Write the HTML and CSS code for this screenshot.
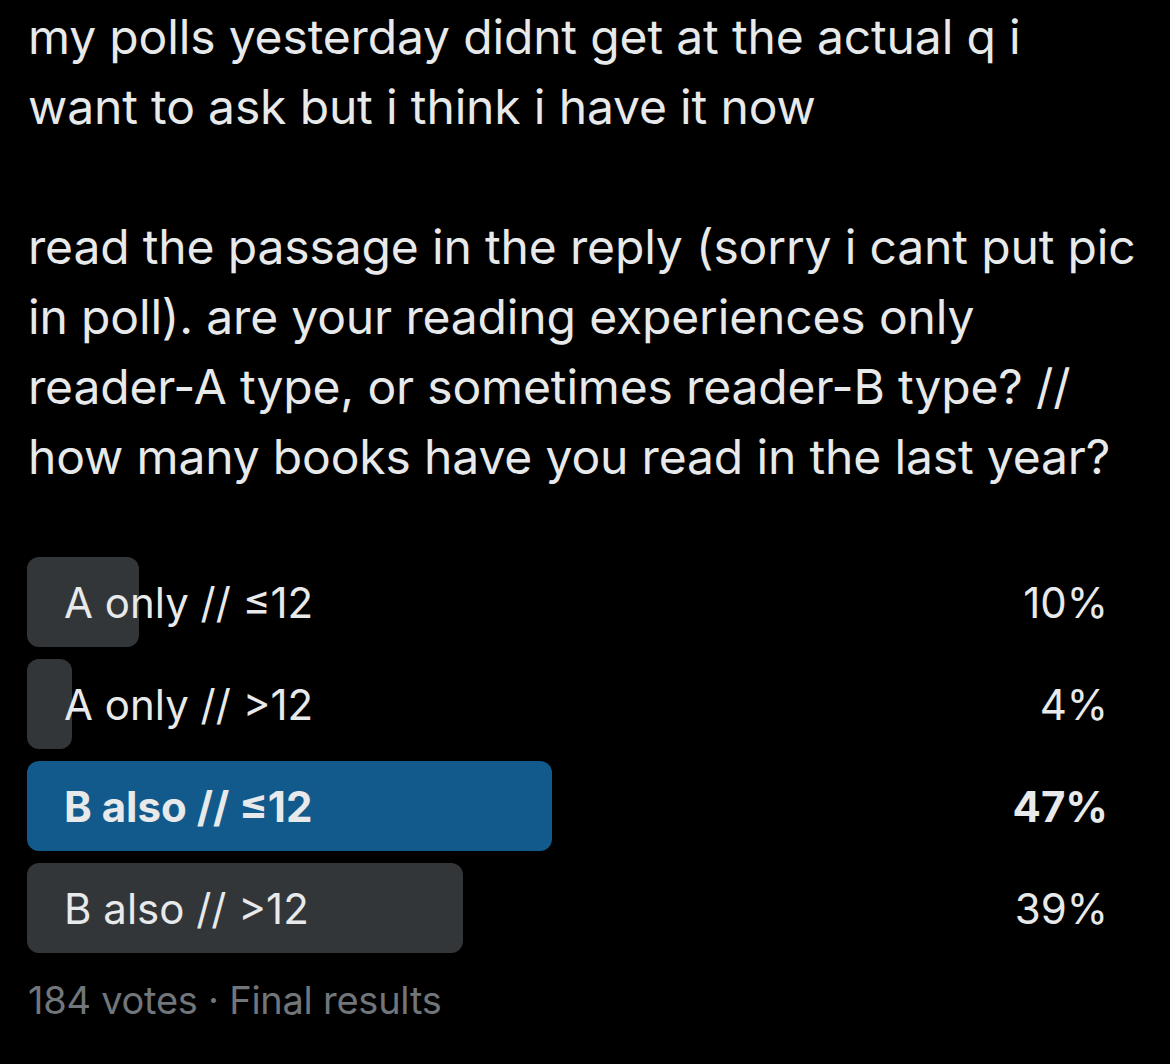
FILE: index.html
```html
<!DOCTYPE html>
<html>
<head>
<meta charset="utf-8">
<link rel="stylesheet" href="styles.css">
</head>
<body>
<main class="tweet">
  <p class="text">my polls yesterday didnt get at the actual q i<br>want to ask but i think i have it now</p>
  <p class="text">read the passage in the reply (sorry i cant put pic<br>in poll). are your reading experiences only<br>reader-A type, or sometimes reader-B type? //<br>how many books have you read in the last year?</p>
  <div class="poll">
    <div class="option">
      <div class="bar" style="width:10%"></div>
      <span class="label">A only // ≤12</span>
      <span class="pct">10%</span>
    </div>
    <div class="option">
      <div class="bar" style="width:4%"></div>
      <span class="label">A only // &gt;12</span>
      <span class="pct">4%</span>
    </div>
    <div class="option winner">
      <div class="bar" style="width:47%"></div>
      <span class="label">B also // ≤12</span>
      <span class="pct">47%</span>
    </div>
    <div class="option">
      <div class="bar" style="width:39%"></div>
      <span class="label">B also // &gt;12</span>
      <span class="pct">39%</span>
    </div>
  </div>
  <p class="meta">184 votes · Final results</p>
</main>
</body>
</html>
```
FILE: styles.css
```css
html, body {
  margin: 0;
  padding: 0;
  background: #000;
}
body {
  font-family: Inter, "Noto Sans", sans-serif;
  color: #e7e9ea;
}
.tweet {
  padding: 0 27px;
  width: 1118px;
}
.text {
  margin: 0 0 70px 1px;
  font-size: 48px;
  line-height: 70px;
  letter-spacing: -0.15px;
}
.text:first-child {
  margin-top: 2px;
}
.text:nth-child(2) {
  margin-bottom: 65px;
}
.poll {
  display: flex;
  flex-direction: column;
  gap: 12px;
}
.option {
  position: relative;
  height: 90px;
  display: flex;
  align-items: center;
  justify-content: space-between;
  font-size: 42px;
  letter-spacing: 0;
}
.bar {
  position: absolute;
  left: 0;
  top: 0;
  bottom: 0;
  background: #333639;
  border-radius: 12px;
}
.winner .bar {
  background: #135a8c;
}
.winner {
  font-weight: 700;
}
.label {
  position: relative;
  margin-left: 37px;
}
.pct {
  position: relative;
  margin-right: 37px;
}
.meta {
  margin: 24px 0 0 1px;
  font-size: 38px;
  color: #71767b;
  letter-spacing: -0.25px;
}
```
